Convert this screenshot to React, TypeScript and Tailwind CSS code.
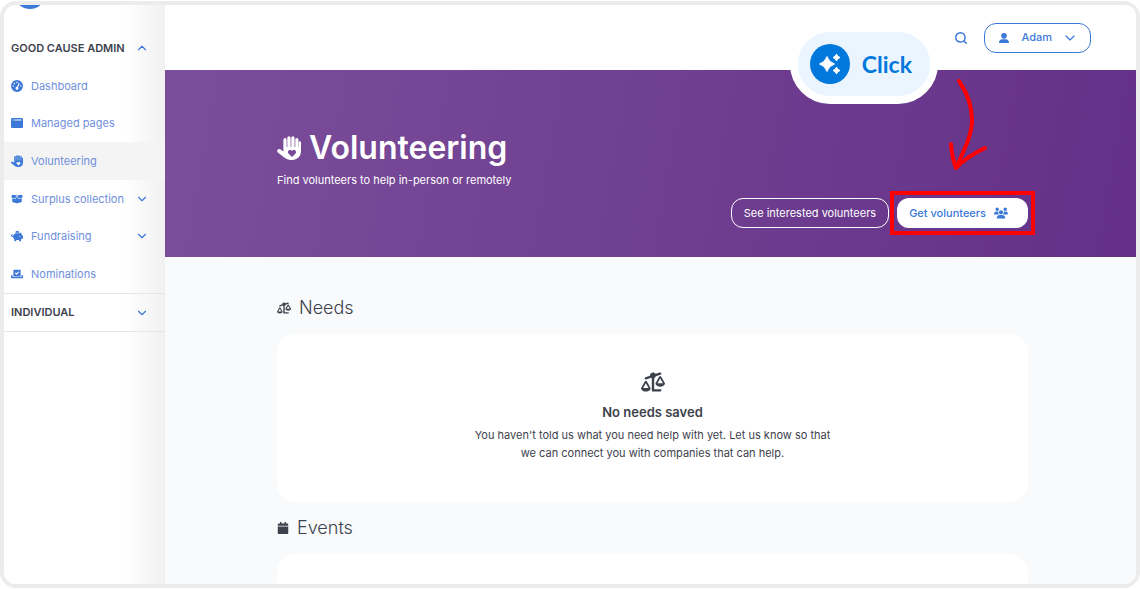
import React from "react";
import { ChevronDown, ChevronUp, Search } from "lucide-react";
import {
  FaBoxOpen,
  FaGaugeHigh,
  FaPiggyBank,
  FaScaleUnbalanced,
  FaUserLarge,
  FaUsers,
} from "react-icons/fa6";
import { FaCalendar, FaVoteYea } from "react-icons/fa";

interface IconProps {
  className?: string;
}

interface NavItem {
  label: string;
  icon: React.ComponentType<IconProps>;
  active?: boolean;
  expandable?: boolean;
}

// Open hand with a heart cut out of the palm
const HandHeartIcon: React.FC<IconProps> = ({ className }) => (
  <svg viewBox="0 0 24 24" className={className} aria-hidden="true">
    <path
      fill="currentColor"
      fillRule="evenodd"
      d="M6.400 3.600a1.600 1.600 0 0 1 3.200 0V11h.7V1.900a1.650 1.650 0 0 1 3.300 0V11h.7V1.900a1.650 1.650 0 0 1 3.300 0V11h.7V3.600a1.600 1.600 0 0 1 3.200 0V11h.3V6.400a1.100 1.100 0 0 1 2.200 0V15.500a8.500 8.500 0 0 1-8.500 8.500h-2.200a9 9 0 0 1-5.700-2.200L.8 16.400a2 2 0 0 1 2.500-3.100L6.400 15.500ZM15 21l3.500-3.500a2.200 2.200 0 0 0-3.100-3.100l-.4.4-.4-.4a2.200 2.200 0 0 0-3.100 3.100Z"
    />
  </svg>
);

const WindowIcon: React.FC<IconProps> = ({ className }) => (
  <svg viewBox="0 0 24 24" className={className} aria-hidden="true">
    <path
      fill="currentColor"
      fillRule="evenodd"
      d="M2.500 2h19A2.500 2.500 0 0 1 24 4.500v15a2.500 2.500 0 0 1-2.500 2.500h-19A2.500 2.500 0 0 1 0 19.500v-15A2.500 2.500 0 0 1 2.500 2ZM3 5v2h2V5Zm4 0v2H21V5Z"
    />
  </svg>
);

const SparkleIcon: React.FC<IconProps> = ({ className }) => (
  <svg viewBox="0 0 24 24" className={className} aria-hidden="true">
    <path
      fill="currentColor"
      d="M9 4.500Q10.800 10.200 16.500 12 10.800 13.800 9 19.500 7.200 13.800 1.500 12 7.200 10.200 9 4.500ZM18.500 2q.8 2.700 3.500 3.500-2.700.8-3.500 3.500-.8-2.700-3.500-3.500 2.700-.8 3.500-3.500ZM18.500 15q.8 2.700 3.500 3.500-2.700.8-3.500 3.500-.8-2.700-3.500-3.500 2.700-.8 3.500-3.500Z"
      stroke="currentColor"
      strokeWidth="1"
      strokeLinejoin="round"
    />
  </svg>
);

const navItems: NavItem[] = [
  { label: "Dashboard", icon: FaGaugeHigh },
  { label: "Managed pages", icon: WindowIcon },
  { label: "Volunteering", icon: HandHeartIcon, active: true },
  { label: "Surplus collection", icon: FaBoxOpen, expandable: true },
  { label: "Fundraising", icon: FaPiggyBank, expandable: true },
  { label: "Nominations", icon: FaVoteYea },
];

const Sidebar: React.FC = () => (
  <aside className="w-[161px] shrink-0 bg-linear-to-r from-white from-75% to-[#f1f1f1] text-[#3b78d8]">
    {/* Bottom edge of the logo */}
    <div className="ml-2.5 flex h-1 w-8 items-end overflow-hidden">
      <div className="size-8 shrink-0 rounded-full bg-[#3b78d8]" />
    </div>

    <button
      type="button"
      className="mt-5 flex h-[38px] w-full items-center justify-between pr-4 pl-[7px] text-[11px] font-semibold text-[#3d424d]"
    >
      GOOD CAUSE ADMIN
      <ChevronUp className="size-3.5 text-[#3b78d8]" />
    </button>

    <nav className="grid h-[226px] grid-rows-6">
      {navItems.map(({ label, icon: Icon, active, expandable }) => (
        <a
          key={label}
          href="#"
          className={`flex items-center pr-4 pl-[7px] text-[11px] ${active ? "bg-[#f4f4f4]" : ""}`}
        >
          <Icon className="mr-2 size-3 shrink-0" />
          <span className="grow whitespace-nowrap text-[#6f8fdc]">{label}</span>
          {expandable && <ChevronDown className="size-3.5" />}
        </a>
      ))}
    </nav>

    <button
      type="button"
      className="flex h-[39px] w-full items-center justify-between border-y border-[#e6e6e6] pr-4 pl-[7px] text-[11px] font-semibold text-[#3d424d]"
    >
      INDIVIDUAL
      <ChevronDown className="size-3.5 text-[#3b78d8]" />
    </button>
  </aside>
);

const Hero: React.FC = () => (
  <section className="h-[187px] bg-linear-100 from-[#7b4e9a] to-[#643088] pt-14 pr-27 pl-28 text-white">
    <h1 className="flex items-center gap-2 text-[32px] leading-[44px] font-semibold">
      <HandHeartIcon className="size-6" />
      Volunteering
    </h1>
    <p className="text-[11px] leading-5">
      Find volunteers to help in-person or remotely
    </p>
    <div className="mt-2 flex justify-end gap-2 text-[11px]">
      <button
        type="button"
        className="h-[30px] rounded-xl border border-white px-3"
      >
        See interested volunteers
      </button>
      <div className="relative">
        <button
          type="button"
          className="flex h-[30px] items-center gap-2 rounded-xl bg-white pr-5 pl-3 font-medium text-[#3b78d8]"
        >
          Get volunteers
          <FaUsers className="size-3.5" />
        </button>
        <div className="pointer-events-none absolute -inset-x-[7px] -inset-y-[7px] border-4 border-[#ff0000]" />
      </div>
    </div>
  </section>
);

const SectionTitle: React.FC<{
  icon: React.ReactNode;
  children: React.ReactNode;
}> = ({ icon, children }) => (
  <h2 className="my-3 flex items-center gap-2 text-lg leading-7 font-light">
    {icon}
    {children}
  </h2>
);

const ClickCallout: React.FC = () => (
  <>
    <div className="absolute top-[19px] right-[198px] flex items-center gap-3 rounded-full border-8 border-white bg-[#ebf5ff] py-3 pr-[18px] pl-3 font-['Lato','Liberation_Sans',sans-serif] text-[23px] leading-10 font-bold text-[#0078dc]">
      <span className="flex size-10 items-center justify-center rounded-full bg-[#0078dc] text-white">
        <SparkleIcon className="size-6" />
      </span>
      Click
    </div>
    <svg
      viewBox="945 75 48 100"
      className="pointer-events-none absolute top-[70px] right-[143px] h-[100px] w-12"
      fill="none"
      stroke="#ff0000"
      strokeWidth="4"
      strokeLinecap="round"
      strokeLinejoin="round"
      aria-hidden="true"
    >
      <path d="M959 81Q972 100 972 120C972 136 963 152 956 168" />
      <path d="M951 144Q952 158 956 168Q966 157 985 148" />
    </svg>
  </>
);

const App: React.FC = () => (
  <div className="h-screen bg-white py-px font-['Inter','Liberation_Sans',sans-serif]">
    <div className="relative flex h-full overflow-hidden rounded-2xl border-4 border-[#ececec] text-[#3d424d]">
      <Sidebar />

      <div className="min-w-0 grow bg-[#f8fafc]">
        <header className="flex h-[65px] items-center justify-end gap-4 bg-white pr-[45px] text-[#3b78d8]">
          <button type="button" aria-label="Search">
            <Search className="size-3.5" strokeWidth={2.5} />
          </button>
          <button
            type="button"
            className="flex h-[30px] items-center rounded-xl border border-[#3b78d8] px-3 text-[11px] font-medium"
          >
            <FaUserLarge className="mr-3 ml-0.5 size-2.5" />
            Adam
            <ChevronDown className="ml-2.5 size-4" strokeWidth={1.75} />
          </button>
        </header>

        <Hero />

        <main className="pt-[25px] pr-27 pl-28">
          <SectionTitle icon={<FaScaleUnbalanced className="size-3.5" />}>
            Needs
          </SectionTitle>
          <div className="flex h-[168px] flex-col items-center rounded-[18px] bg-white pt-9 text-center">
            <FaScaleUnbalanced className="size-6" />
            <h3 className="mt-2 text-[13px] leading-5 font-semibold">
              No needs saved
            </h3>
            <p className="mt-1 max-w-[370px] text-[11px] leading-[18px]">
              You haven't told us what you need help with yet. Let us know so
              that we can connect you with companies that can help.
            </p>
          </div>

          <SectionTitle icon={<FaCalendar className="size-3" />}>
            Events
          </SectionTitle>
          <div className="h-[168px] rounded-[18px] bg-white" />
        </main>
      </div>

      <ClickCallout />
    </div>
  </div>
);

export default App;
